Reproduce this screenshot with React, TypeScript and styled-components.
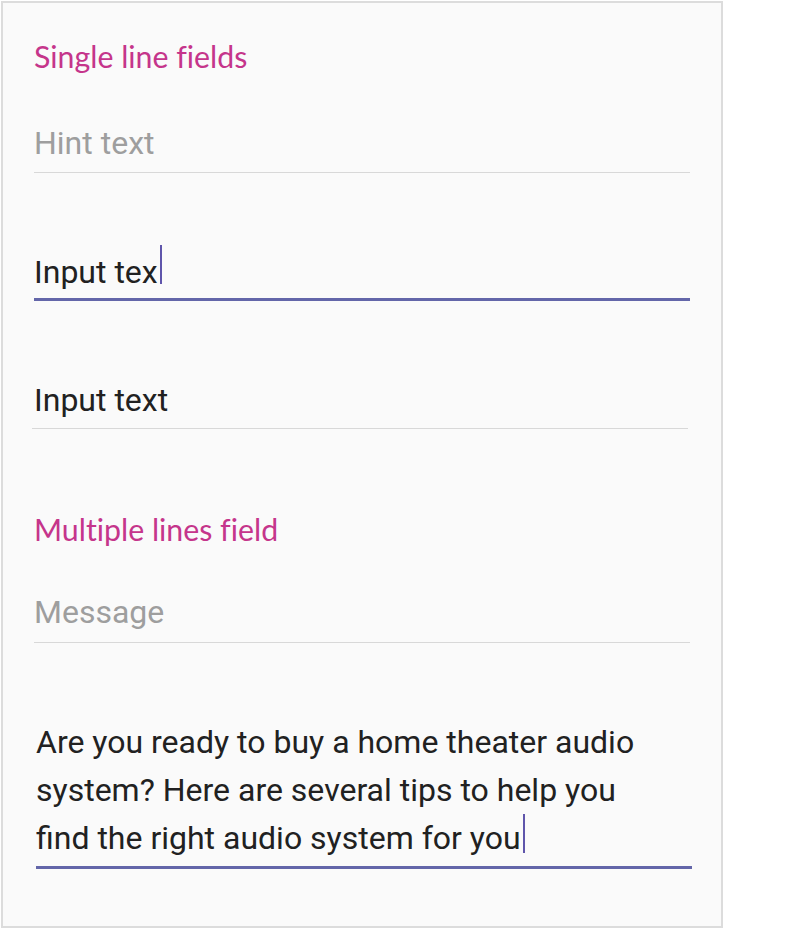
import React from "react";
import styled, { createGlobalStyle } from "styled-components";

const GlobalStyle = createGlobalStyle`
  html, body { margin: 0; padding: 0; background: #ffffff; }
  body { font-family: Roboto, "Liberation Sans", sans-serif; }
  * { box-sizing: border-box; }
`;

const Panel = styled.div`
  margin: 1px 0 0 1px;
  width: 722px;
  height: 927px;
  border: 2px solid #dcdcdc;
  background: #fafafa;
  padding: 35px 31px 0 31px;
  display: flex;
  flex-direction: column;
`;

const SectionTitle = styled.div<{ $mt: number }>`
  margin-top: ${(p) => p.$mt}px;
  font-family: Lato, "Open Sans", sans-serif;
  font-size: 30.3px;
  line-height: 36px;
  color: #c5358b;
  font-variant-ligatures: none;
  font-feature-settings: "liga" 0;
`;

const Field = styled.div<{
  $mt: number;
  $focused?: boolean;
  $shift?: number;
  $indent?: number;
  $pb: number;
}>`
  margin-top: ${(p) => p.$mt}px;
  margin-left: ${(p) => p.$shift ?? 0}px;
  margin-right: ${(p) => -(p.$shift ?? 0)}px;
  padding-left: ${(p) => p.$indent ?? 0}px;
  padding-bottom: ${(p) => p.$pb}px;
  border-bottom: ${(p) => (p.$focused ? "3px solid #6366a9" : "1px solid #d8d8d8")};
  font-family: Roboto, sans-serif;
  font-size: 32px;
  line-height: 36px;
`;

const Hint = styled.span`
  color: #9e9e9e;
`;

const Value = styled.span`
  color: #212121;
`;

const Paragraph = styled.div`
  color: #212121;
  line-height: 48px;
  width: 620px;
`;

const Caret = styled.span<{ $drop: number }>`
  display: inline-block;
  width: 2px;
  height: 39px;
  margin-left: 2px;
  margin-top: -12px;
  background: #5f55ab;
  vertical-align: ${(p) => -p.$drop}px;
`;

export default function App() {
  return (
    <>
      <GlobalStyle />
      <Panel>
        <SectionTitle $mt={0}>Single line fields</SectionTitle>
        <Field $mt={51} $pb={11}>
          <Hint>Hint text</Hint>
        </Field>
        <Field $mt={81} $pb={8} $focused>
          <Value>Input tex</Value>
          <Caret $drop={1} />
        </Field>
        <Field $mt={81} $pb={10} $shift={-2} $indent={2}>
          <Value>Input text</Value>
        </Field>
        <SectionTitle $mt={82}>Multiple lines field</SectionTitle>
        <Field $mt={47} $pb={12}>
          <Hint>Message</Hint>
        </Field>
        <Field $mt={75} $pb={4} $focused $shift={2}>
          <Paragraph>
            Are you ready to buy a home theater audio system? Here are several
            tips to help you find the right audio system for you
            <Caret $drop={4} />
          </Paragraph>
        </Field>
      </Panel>
    </>
  );
}
